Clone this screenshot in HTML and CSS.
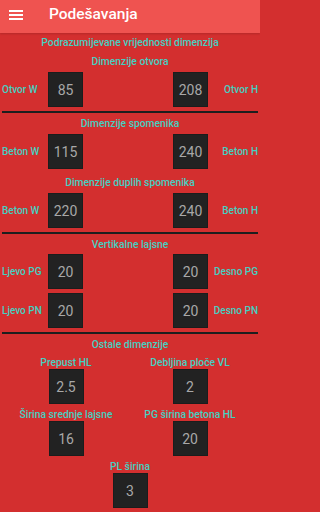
FILE: index.html
```html
<!DOCTYPE html>
<html>
<head>
<meta charset="utf-8">
<link rel="stylesheet" href="styles.css">
</head>
<body>
<div class="page">
<header class="toolbar">
  <svg class="menu" width="14" height="10" viewBox="0 0 14 10"><rect x="0" y="0" width="14" height="2" fill="#fff"/><rect x="0" y="4" width="14" height="2" fill="#fff"/><rect x="0" y="8" width="14" height="2" fill="#fff"/></svg>
  <span class="title">Podešavanja</span>
</header>
<main class="content">
  <div class="heading h-top">Podrazumijevane vrijednosti dimenzija</div>
  <div class="heading h-sub">Dimenzije otvora</div>
  <div class="row r-first">
    <span class="lbl-l">Otvor W</span><div class="box">85</div><span></span><div class="box">208</div><span class="lbl-r">Otvor H</span>
  </div>
  <div class="divider"></div>
  <div class="heading h-sec">Dimenzije spomenika</div>
  <div class="row r-first">
    <span class="lbl-l">Beton W</span><div class="box">115</div><span></span><div class="box">240</div><span class="lbl-r">Beton H</span>
  </div>
  <div class="heading h-sub2">Dimenzije duplih spomenika</div>
  <div class="row r-first">
    <span class="lbl-l">Beton W</span><div class="box">220</div><span></span><div class="box">240</div><span class="lbl-r">Beton H</span>
  </div>
  <div class="divider"></div>
  <div class="heading h-sec">Vertikalne lajsne</div>
  <div class="row r-tight">
    <span class="lbl-l">Ljevo PG</span><div class="box">20</div><span></span><div class="box">20</div><span class="lbl-r">Desno PG</span>
  </div>
  <div class="row r-next">
    <span class="lbl-l">Ljevo PN</span><div class="box">20</div><span></span><div class="box">20</div><span class="lbl-r">Desno PN</span>
  </div>
  <div class="divider"></div>
  <div class="heading h-sec">Ostale dimenzije</div>
  <div class="pairs">
    <div class="item"><span class="lbl-c">Prepust HL</span><div class="box">2.5</div></div>
    <div class="item"><span class="lbl-c">Debljina ploče VL</span><div class="box">2</div></div>
    <div class="item item-gap"><span class="lbl-c">Širina srednje lajsne</span><div class="box">16</div></div>
    <div class="item item-gap"><span class="lbl-c">PG širina betona HL</span><div class="box">20</div></div>
  </div>
  <div class="item single"><span class="lbl-c">PL širina</span><div class="box">3</div></div>
</main>
</div>
</body>
</html>
```
FILE: styles.css
```css
html, body {
  margin: 0;
  padding: 0;
  background: #d32f2f;
  font-family: Roboto, "Liberation Sans", sans-serif;
}
.page {
  width: 260px;
  height: 512px;
  overflow: hidden;
  background: #d32f2f;
}
.toolbar {
  height: 33px;
  background: #ef5350;
  display: flex;
  align-items: center;
  box-shadow: 0 1px 2px rgba(0,0,0,0.15);
  position: relative;
}
.menu {
  margin-left: 9px;
  margin-top: -4px;
  display: block;
}
.title {
  margin-left: 26px;
  margin-top: -5px;
  color: #fff;
  font-size: 15.5px;
  font-weight: 500;
}
.content {
  display: flex;
  flex-direction: column;
}
.heading {
  color: #45d0c2;
  font-size: 10.3px;
  font-weight: 500;
  line-height: 14px;
  text-align: center;
  white-space: nowrap;
}
.h-top { margin-top: 3px; }
.h-sub { margin-top: 5px; }
.h-sec { margin-top: 4px; }
.h-sub2 { margin-top: 7px; }
.row {
  display: grid;
  grid-template-columns: 46px 35px 1fr 35px 50px;
  align-items: center;
  padding: 0 2px;
}
.r-first { margin-top: 3px; }
.r-tight { margin-top: 2px; }
.r-next { margin-top: 4px; }
.lbl-l, .lbl-r, .lbl-c {
  color: #45d0c2;
  font-size: 10px;
  font-weight: 500;
  line-height: 13px;
  white-space: nowrap;
}
.lbl-c { font-size: 10.3px; }
.lbl-r { text-align: right; }
.box {
  width: 35px;
  height: 35px;
  box-sizing: border-box;
  background: #222222;
  border: 1px solid #1c1c1c;
  color: #a8a8a8;
  font-size: 14px;
  display: flex;
  align-items: center;
  justify-content: center;
}
.divider {
  margin: 4px 2px 0;
  height: 2px;
  background: #1e1e1e;
}
.pairs {
  display: grid;
  grid-template-columns: 124px 124px;
  padding-left: 4px;
  margin-top: 4px;
}
.item {
  display: flex;
  flex-direction: column;
  align-items: center;
}
.item-gap { margin-top: 4px; }
.single { margin-top: 4px; }
```
